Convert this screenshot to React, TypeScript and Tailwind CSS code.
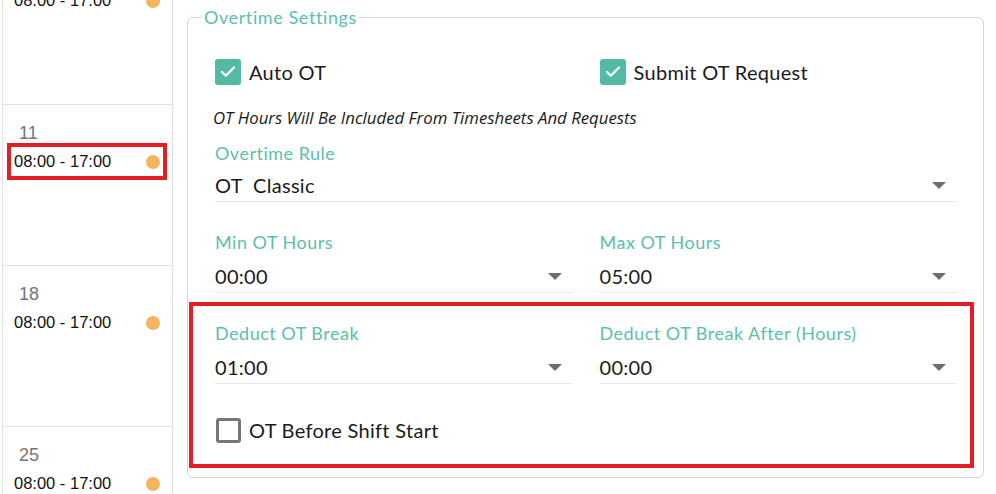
import { Check } from 'lucide-react';

const days = [
  { day: '', highlight: false },
  { day: '11', highlight: true },
  { day: '18', highlight: false },
  { day: '25', highlight: false },
];

function Caret() {
  return (
    <svg width="14" height="7" viewBox="0 0 14 7" className="shrink-0">
      <polygon points="0,0 14,0 7,7" fill="#6e6e6e" />
    </svg>
  );
}

function Checkbox({ checked, label }: { checked: boolean; label: string }) {
  return (
    <div className="flex h-[26px] items-center gap-[8px]">
      {checked ? (
        <span className="flex h-[26px] w-[26px] items-center justify-center rounded-[3px] bg-[#54baa6]">
          <Check className="h-[18px] w-[18px] text-white" strokeWidth={3} />
        </span>
      ) : (
        <span className="ml-px h-[25px] w-[25px] rounded-[3px] border-[3px] border-[#777777]" />
      )}
      <span className="text-[20px] leading-none tracking-[0.3px] text-[#1a1a1a]">{label}</span>
    </div>
  );
}

function SelectField({ label, value, tight }: { label: string; value: string; tight?: boolean }) {
  return (
    <div>
      <div className="h-[24px] text-[18px] leading-[24px] tracking-[0.5px] text-[#5cbfae]">{label}</div>
      <div
        className={`${tight ? 'mt-[4px]' : 'mt-[6px]'} flex h-[33px] items-center justify-between border-b border-[#e6e6e6] pr-[10px]`}
      >
        <span className="whitespace-pre text-[20px] tracking-[0.3px] text-[#1a1a1a]">{value}</span>
        <Caret />
      </div>
    </div>
  );
}

export default function App() {
  return (
    <div className="flex h-[494px] w-[996px] items-start overflow-hidden bg-white font-['Lato',sans-serif]">
      {/* calendar column */}
      <div className="-mt-[56px] ml-[2px] w-[171px] shrink-0 border-x border-[#e2e2e2] font-['Liberation_Sans',Arial,sans-serif]">
        {days.map((d, i) => (
          <div key={i} className="h-[161px] border-b border-[#e2e2e2] pt-[17px]">
            <div className="h-[22px] pl-[16px] text-[18px] leading-[22px] text-[#767676]">{d.day}</div>
            <div
              className={`mt-[3px] ml-[8px] flex h-[29px] w-[152px] items-center justify-between pl-[3px] pr-[3px] ${
                d.highlight ? 'outline-4 outline-[#e31e24]' : ''
              }`}
            >
              <span className="text-[16.5px] text-[#111111]">08:00 - 17:00</span>
              <span className="h-[14px] w-[14px] rounded-full bg-[#f5b45e]" />
            </div>
          </div>
        ))}
      </div>

      {/* overtime settings */}
      <fieldset className="mt-[5px] mr-[12px] ml-[14px] flex-1 rounded-md border border-[#d6d6d6] pb-[13px]">
        <legend className="ml-[14px] px-[2px] text-[18px] leading-[24px] tracking-[0.6px] text-[#5cbfae]">
          Overtime Settings
        </legend>

        <div className="px-[27px]">
          <div className="mt-[30px] grid grid-cols-2 gap-x-[28px]">
            <Checkbox checked label="Auto OT" />
            <Checkbox checked label="Submit OT Request" />
          </div>

          <p className="mt-[23px] -ml-[2px] font-['Open_Sans',sans-serif] text-[16.8px] leading-[20px] italic text-[#1a1a1a]">
            OT Hours Will Be Included From Timesheets And Requests
          </p>

          <div className="mt-[13px]">
            <SelectField label="Overtime Rule" value="OT  Classic" tight />
          </div>

          <div className="mt-[28px] grid grid-cols-2 gap-x-[28px]">
            <SelectField label="Min OT Hours" value="00:00" />
            <SelectField label="Max OT Hours" value="05:00" />
          </div>

          <div className="mt-[13px] -mr-[14px] -ml-[22px] pt-[15px] pr-[14px] pb-[21px] pl-[22px] outline-4 outline-[#e31e24]">
            <div className="grid grid-cols-2 gap-x-[28px]">
              <SelectField label="Deduct OT Break" value="01:00" />
              <SelectField label="Deduct OT Break After (Hours)" value="00:00" />
            </div>
            <div className="mt-[33px]">
              <Checkbox checked={false} label="OT Before Shift Start" />
            </div>
          </div>
        </div>
      </fieldset>
    </div>
  );
}
